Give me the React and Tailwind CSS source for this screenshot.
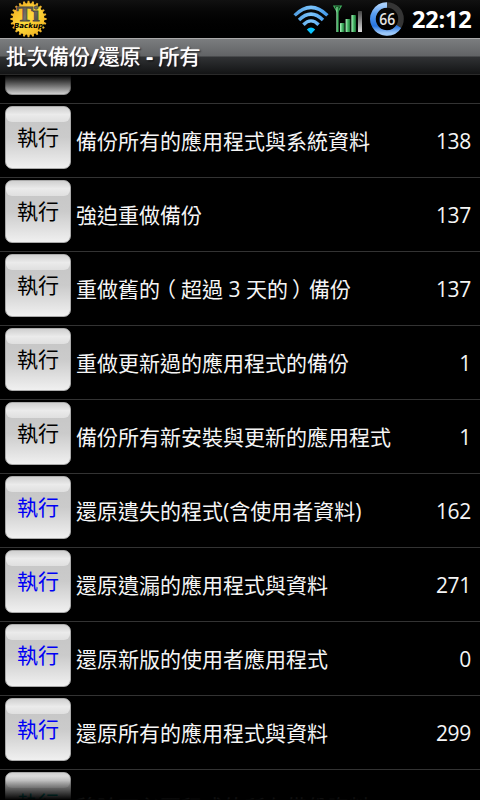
const rows = [
  { label: '備份所有的應用程式與系統資料', count: 138 },
  { label: '強迫重做備份', count: 137 },
  {
    label: (
      <>
        重做舊的<span className="relative -left-[5px]">（</span>超過 3 天的<span className="relative left-[4px]">）</span>備份
      </>
    ),
    count: 137,
  },
  { label: '重做更新過的應用程式的備份', count: 1 },
  { label: '備份所有新安裝與更新的應用程式', count: 1 },
  { label: '還原遺失的程式(含使用者資料)', count: 162, color: 'text-[#0000f5]' },
  { label: '還原遺漏的應用程式與資料', count: 271, color: 'text-[#0000f5]' },
  { label: '還原新版的使用者應用程式', count: 0, color: 'text-[#0000f5]' },
  { label: '還原所有的應用程式與資料', count: 299, color: 'text-[#0000f5]' },
  { label: '移除不必要程式的所有備份資料', count: '', color: 'text-[#008b80]' },
];

const teeth = Array.from({ length: 24 }, (_, i) => i * 15);

function GearLogo() {
  return (
    <svg className="ml-[10px] h-[38px] w-[38px] shrink-0" viewBox="0 0 38 38">
      <defs>
        <linearGradient id="gold" x1="0" y1="0" x2="1" y2="1">
          <stop offset="0" stopColor="#f3a91c" />
          <stop offset="0.5" stopColor="#fcd93c" />
          <stop offset="1" stopColor="#f2aa18" />
        </linearGradient>
        <linearGradient id="steel" x1="0" y1="0" x2="1" y2="1">
          <stop offset="0" stopColor="#45433e" />
          <stop offset="0.5" stopColor="#77746b" />
          <stop offset="1" stopColor="#403e39" />
        </linearGradient>
      </defs>
      {teeth.map((a) => (
        <path key={a} d="M17 4 L17.7 0.8 H19.3 L20 4 Z" fill="#eeb32a" transform={`rotate(${a} 18.5 19)`} />
      ))}
      <circle cx="18.5" cy="19" r="15.8" fill="url(#gold)" />
      <text x="6.5" y="21.3" fontFamily="Liberation Serif, serif" fontWeight="bold" fontSize="22" textLength="23" lengthAdjust="spacingAndGlyphs" fill="url(#steel)" stroke="#504c42" strokeWidth="0.8">Ti</text>
      <text x="4" y="27.6" fontFamily="DejaVu Sans, sans-serif" fontWeight="bold" fontStyle="italic" fontSize="7" textLength="29" lengthAdjust="spacingAndGlyphs" fill="#000">Backup</text>
    </svg>
  );
}

function WifiIcon() {
  return (
    <svg className="h-[38px] w-[38px]" viewBox="0 0 38 38">
      <defs>
        <linearGradient id="wifi" gradientUnits="userSpaceOnUse" x1="2" y1="0" x2="36" y2="0">
          <stop offset="0" stopColor="#4d9be0" />
          <stop offset="0.5" stopColor="#7cc4fb" />
          <stop offset="1" stopColor="#3f96ea" />
        </linearGradient>
      </defs>
      <g fill="none" stroke="url(#wifi)" strokeWidth="3.4">
        <path d="M2.6 15.4 Q19 -0.6 35.4 15.4" />
        <path d="M7 20 Q19 8.2 31 20" />
        <path d="M11.4 24.8 Q19 17 26.6 24.8" />
      </g>
      <path d="M14.8 29.4 Q19 25.6 23.2 29.4 L19 34 Z" fill="#08c4ff" />
    </svg>
  );
}

function SignalIcon() {
  return (
    <svg className="h-[38px] w-[30px]" viewBox="0 0 30 38">
      <defs>
        <linearGradient id="bar" x1="0" y1="0" x2="1" y2="0">
          <stop offset="0" stopColor="#b5f5c4" />
          <stop offset="0.5" stopColor="#45b565" />
          <stop offset="1" stopColor="#1c6f34" />
        </linearGradient>
        <linearGradient id="barOff" x1="0" y1="0" x2="0" y2="1">
          <stop offset="0" stopColor="#444" />
          <stop offset="1" stopColor="#ddd" />
        </linearGradient>
      </defs>
      <path d="M0.8 6 H8.2 L4.5 12.6 Z" fill="#06200c" stroke="#3fae5d" strokeWidth="1.2" />
      <rect x="3.4" y="7" width="2.4" height="25" fill="url(#bar)" />
      <rect x="7" y="23" width="4.6" height="9" rx="0.6" fill="url(#bar)" />
      <rect x="12.6" y="19" width="4.6" height="13" rx="0.6" fill="url(#bar)" />
      <rect x="18.4" y="15" width="4.6" height="17" rx="0.6" fill="url(#bar)" />
      <rect x="25" y="11" width="4" height="21" rx="0.6" fill="url(#barOff)" />
    </svg>
  );
}

function BatteryRing() {
  return (
    <svg className="h-[38px] w-[36px]" viewBox="0 0 36 38">
      <defs>
        <linearGradient id="ring" x1="0" y1="0" x2="0" y2="1">
          <stop offset="0" stopColor="#a8cffb" />
          <stop offset="0.3" stopColor="#5a9ff2" />
          <stop offset="0.75" stopColor="#2673df" />
          <stop offset="1" stopColor="#9cc8fa" />
        </linearGradient>
      </defs>
      <circle cx="18" cy="19" r="14" fill="none" stroke="#353535" strokeWidth="5.6" />
      <path d="M18 5 A14 14 0 1 0 29.8 26.5" fill="none" stroke="url(#ring)" strokeWidth="5.6" />
      <text x="18.3" y="24.8" textAnchor="middle" fontFamily="Open Sans, Noto Sans, sans-serif" fontWeight="600" fontSize="15.5" textLength="16" lengthAdjust="spacingAndGlyphs" fill="#e4e4e4">66</text>
    </svg>
  );
}

function StatusBar() {
  return (
    <header className="flex h-[38px] shrink-0 items-center bg-linear-to-b from-[#111] to-black">
      <GearLogo />
      <div className="ml-auto flex items-center">
        <WifiIcon />
        <div className="ml-[3px] flex"><SignalIcon /></div>
        <div className="ml-[6px] flex"><BatteryRing /></div>
        <span className="ml-[7px] mr-[8px] w-[60px] whitespace-nowrap font-['Open_Sans','Noto_Sans',sans-serif] text-[23.5px] leading-[38px] font-bold tracking-[-0.2px] text-white">22:12</span>
      </div>
    </header>
  );
}

function RunButton({ color = 'text-black', children }) {
  return (
    <button
      className={`relative flex h-[63px] w-[66px] shrink-0 justify-center overflow-hidden rounded-[7px] border border-[#aaa] bg-linear-to-b from-[#c4c4c4] via-[#cbcbcb] to-[#f0f0f0] pt-[14px] text-[21px] leading-[32px] ${color}`}
    >
      <span className="absolute inset-x-0 top-0 h-[15px] rounded-b-[6px] bg-linear-to-b from-[#d0d0d0] via-[#ebebeb] to-[#dfdfdf]" />
      <span className="relative">{children}</span>
    </button>
  );
}

function Row({ label, count, color }) {
  return (
    <li className="flex h-[74px] shrink-0 items-start border-b border-[#333] pt-[2px] pl-[5px] pr-[9px]">
      <RunButton color={color}>執行</RunButton>
      <span className="ml-[5px] mt-[19px] whitespace-nowrap text-[21px] leading-[32px]">{label}</span>
      <span className="ml-auto mt-[19px] text-[21px] leading-[32px] tracking-[-0.3px]">{count}</span>
    </li>
  );
}

export default function App() {
  return (
    <div className="flex h-[800px] w-[480px] flex-col overflow-hidden bg-black font-['Open_Sans','Noto_Sans_CJK_TC',sans-serif] text-[#f5f5f5]">
      <StatusBar />
      <h1 className="h-[37px] shrink-0 border-t border-[#aaa] border-b border-b-[#2a2a2a] bg-[linear-gradient(to_bottom,#7b7d7f_0,#616365_17px,#303234_18px,#131415_100%)] pl-[6px] text-[21px] leading-[35px] font-normal whitespace-nowrap text-white [text-shadow:0_0_1px_#fff,1px_1px_2px_#000]">
        批次備份<span className="font-bold">/</span>還原 <span className="font-bold">-</span> 所有
      </h1>
      <main className="relative flex min-h-0 flex-1 flex-col overflow-hidden">
        <div className="flex h-[29px] shrink-0 flex-col justify-end overflow-hidden border-b border-[#333] pb-[8px] pl-[5px]">
          <RunButton />
        </div>
        <ul className="flex flex-col">
          {rows.map((row, i) => (
            <Row key={i} {...row} />
          ))}
        </ul>
        <div className="pointer-events-none absolute inset-x-0 top-0 h-[22px] bg-linear-to-b from-black to-transparent" />
        <div className="pointer-events-none absolute inset-x-0 bottom-0 h-[24px] bg-linear-to-t from-black to-transparent" />
      </main>
    </div>
  );
}
